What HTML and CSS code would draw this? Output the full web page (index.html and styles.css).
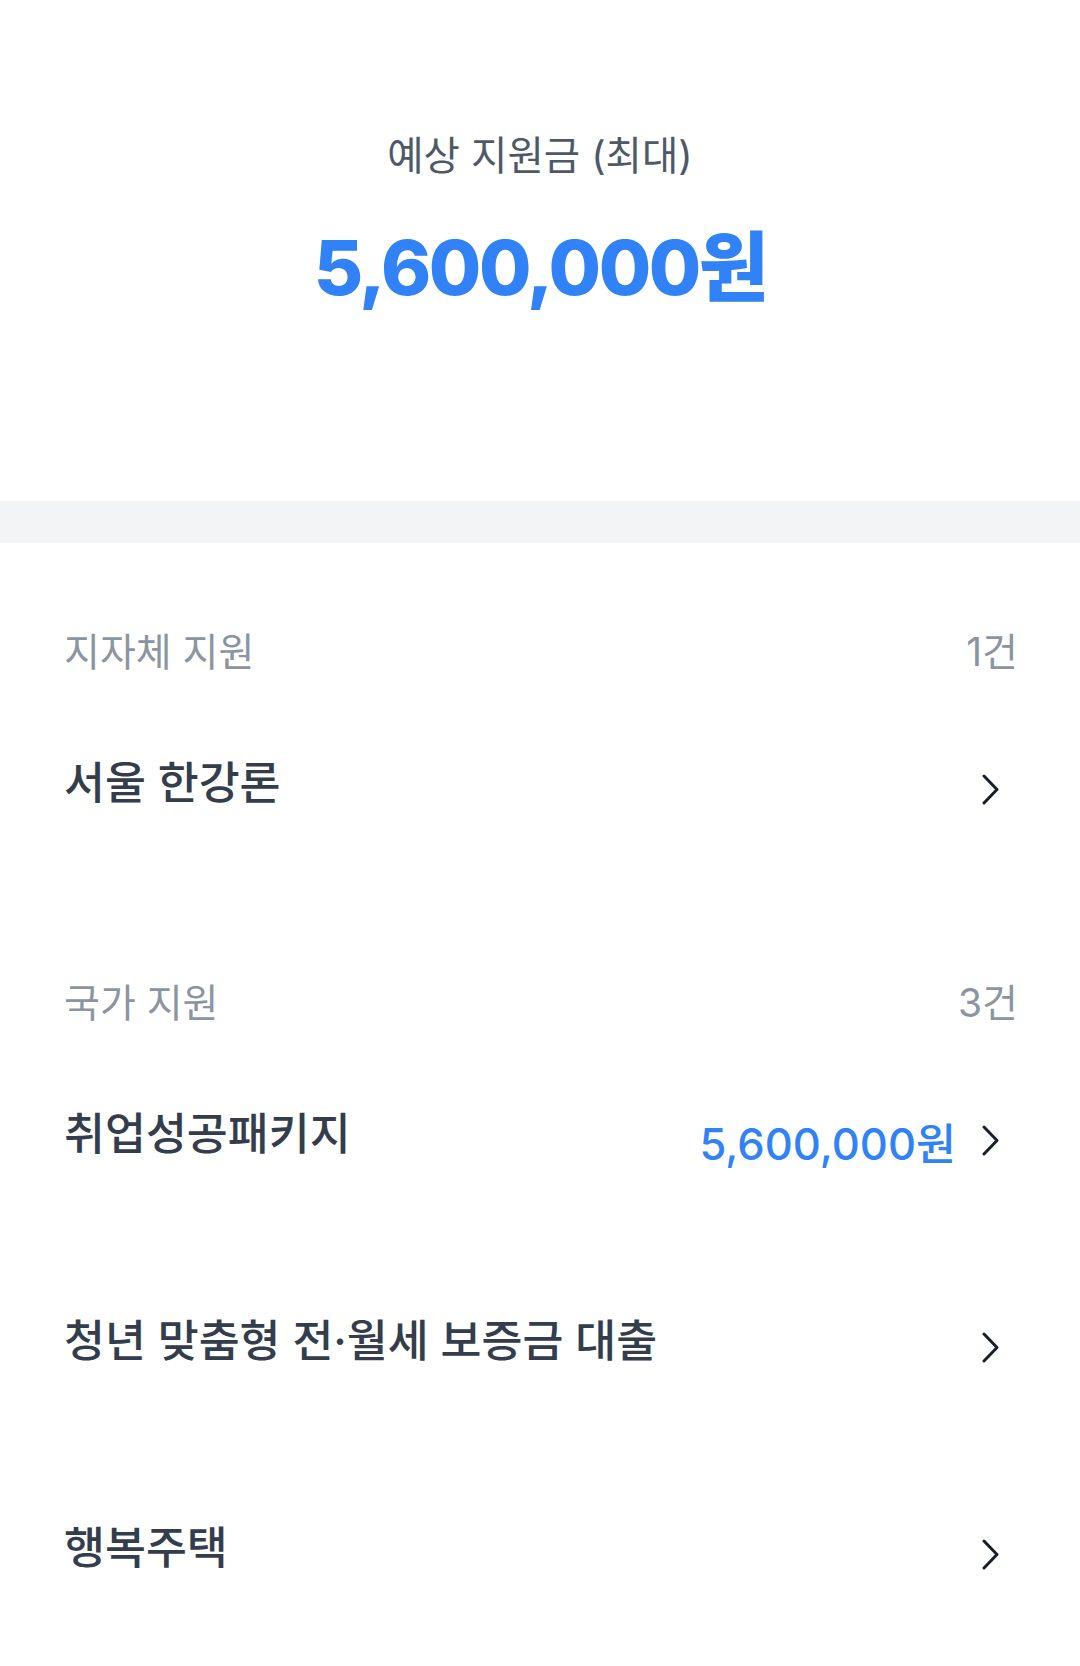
FILE: index.html
```html
<!DOCTYPE html>
<html lang="ko">
<head>
    <meta charset="utf-8">
    <meta name="viewport" content="width=device-width, initial-scale=1.0">
    <link rel="stylesheet" href="styles.css">
</head>
<body>
    <div class="summary">
        <div class="summaryTitle">예상 지원금 (최대)</div>
        <div class="summaryAmount">5,600,000원</div>
    </div>

    <div class="divider"></div>

    <div class="section">
        <div class="sectionHeader">
            <span>지자체 지원</span>
            <span>1건</span>
        </div>
        <div class="row">
            <div class="rowTitle">서울 한강론</div>
            <div class="rowRight">
                <svg class="chevron" viewBox="0 0 17 31"><path d="M2 2 L15 15.5 L2 29"/></svg>
            </div>
        </div>
    </div>

    <div class="section">
        <div class="sectionHeader">
            <span>국가 지원</span>
            <span>3건</span>
        </div>
        <div class="row">
            <div class="rowTitle">취업성공패키지</div>
            <div class="rowRight">
                <span class="rowAmount">5,600,000원</span>
                <svg class="chevron" viewBox="0 0 17 31"><path d="M2 2 L15 15.5 L2 29"/></svg>
            </div>
        </div>
        <div class="row">
            <div class="rowTitle">청년 맞춤형 전·월세 보증금 대출</div>
            <div class="rowRight">
                <svg class="chevron" viewBox="0 0 17 31"><path d="M2 2 L15 15.5 L2 29"/></svg>
            </div>
        </div>
        <div class="row">
            <div class="rowTitle">행복주택</div>
            <div class="rowRight">
                <svg class="chevron" viewBox="0 0 17 31"><path d="M2 2 L15 15.5 L2 29"/></svg>
            </div>
        </div>
    </div>
</body>
</html>
```

FILE: styles.css
```css
body {
    margin: 0;
    background: #ffffff;
    font-family: Inter, "Noto Sans CJK KR", sans-serif;
    color: #333d4b;
}

.summary {
    display: flex;
    flex-direction: column;
    align-items: center;
    padding: 132px 0 184px;
}

.summaryTitle {
    font-size: 39.5px;
    line-height: 48px;
    color: #4e5968;
}

.summaryAmount {
    margin-top: 37px;
    font-size: 76px;
    line-height: 100px;
    font-weight: 800;
    letter-spacing: -2.5px;
    color: #3182f6;
}

.divider {
    height: 42px;
    background: #f2f4f6;
}

.section + .section {
    margin-top: 1px;
}

.sectionHeader {
    display: flex;
    justify-content: space-between;
    padding: 85px 62px 10px 64px;
    font-size: 39px;
    line-height: 48px;
    color: #8b95a1;
}

.row {
    display: flex;
    align-items: center;
    justify-content: space-between;
    height: 207px;
    padding: 0 81px 0 64px;
}

.rowTitle {
    margin-bottom: 14px;
    font-size: 44.5px;
    line-height: 52px;
    font-weight: 500;
    color: #333d4b;
}

.rowRight {
    display: flex;
    align-items: center;
}

.rowAmount {
    margin-right: 26px;
    padding-top: 6px;
    font-size: 43.5px;
    line-height: 56px;
    font-weight: 500;
    color: #3182f6;
}

.chevron {
    width: 17px;
    height: 31px;
    fill: none;
    stroke: #191f28;
    stroke-width: 3;
    stroke-linecap: round;
    stroke-linejoin: round;
}
```
